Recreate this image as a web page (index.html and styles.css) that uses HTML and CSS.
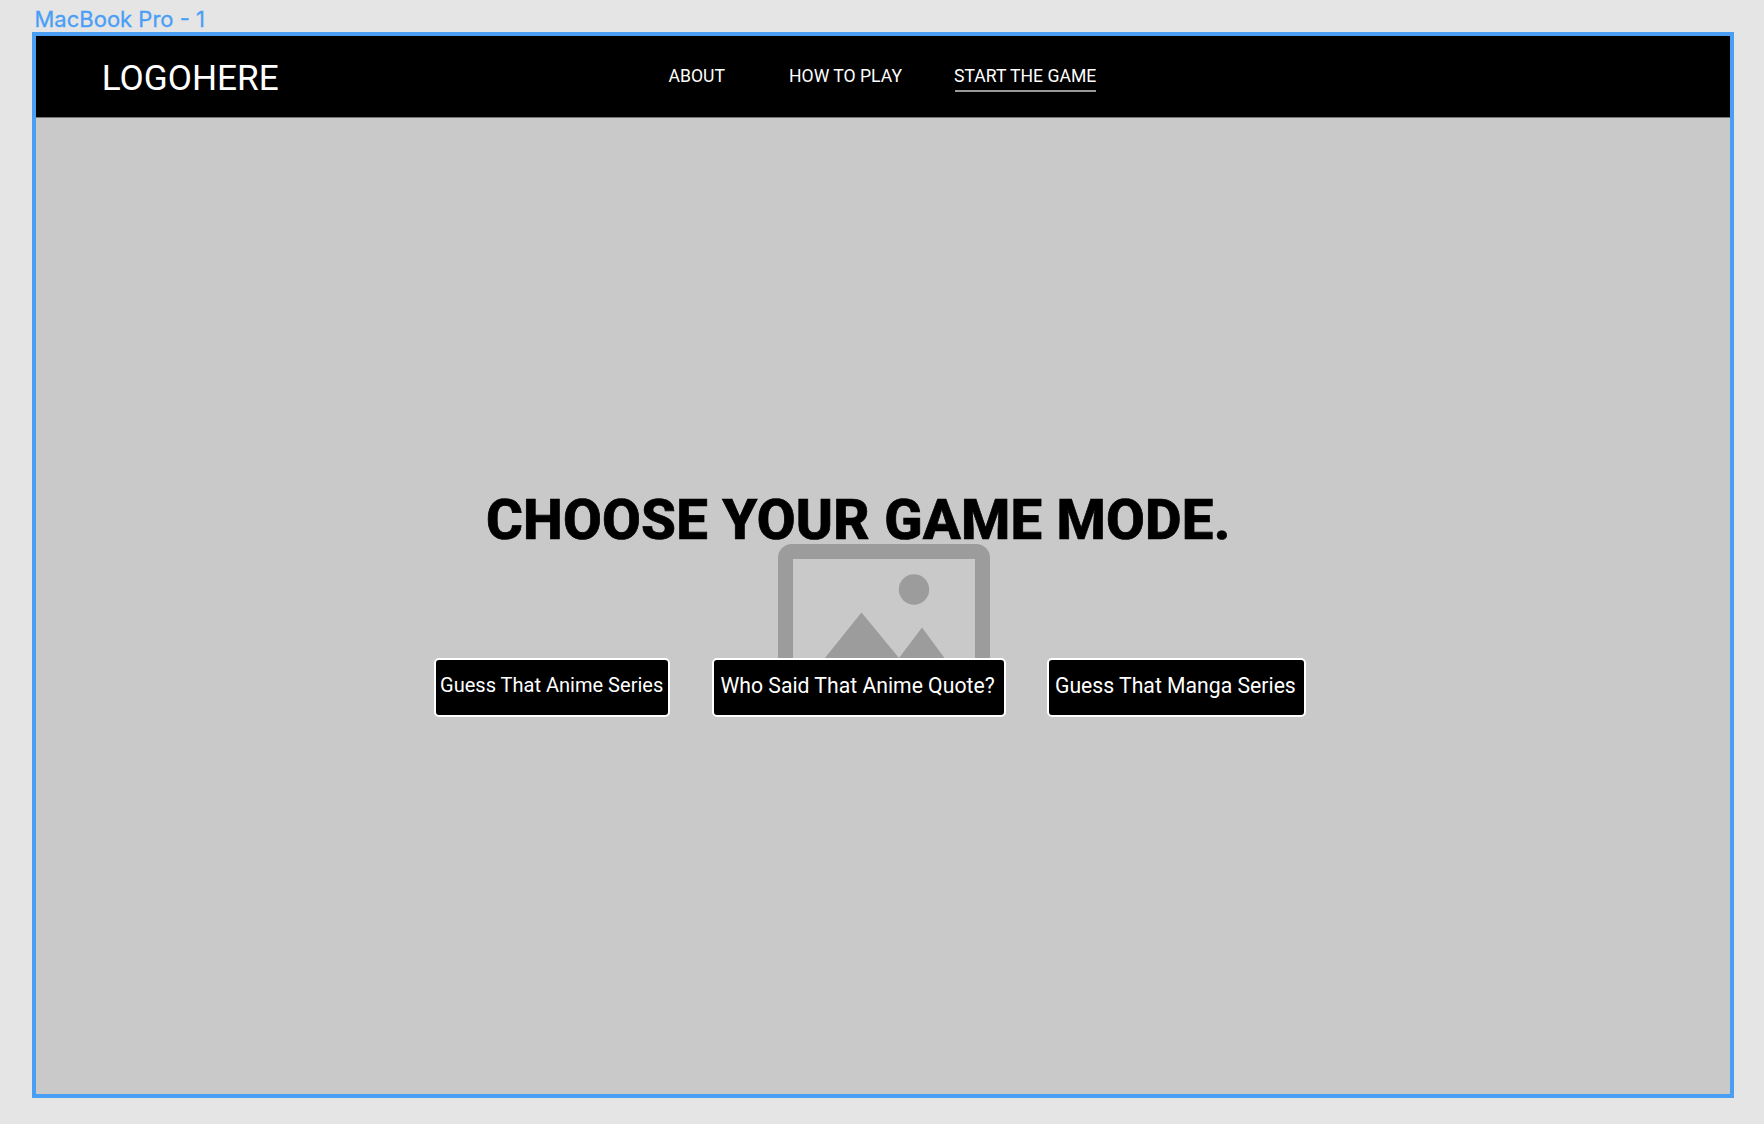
FILE: index.html
```html
<!DOCTYPE html>
<html lang="en">
<head>
<meta charset="utf-8">
<title>MacBook Pro - 1</title>
<link rel="stylesheet" href="styles.css">
</head>
<body>
<div class="label">MacBook Pro - 1</div>
<div class="frame">
  <header class="header">
    <div class="logo">LOGOHERE</div>
    <nav class="nav">
      <a class="about">ABOUT</a>
      <a class="how">HOW TO PLAY</a>
      <a class="start">START THE GAME</a>
    </nav>
  </header>
  <main class="main">
    <svg class="picture" width="214" height="150" viewBox="0 0 214 150" fill="#9c9c9c">
      <path fill-rule="evenodd" d="M14 0H198a14 14 0 0 1 14 14V150H0V14A14 14 0 0 1 14 0ZM15 15V135H197V15Z"/>
      <circle cx="136" cy="45.500" r="15.200"/>
      <path d="M83.500 68.500 121 114 144 83.500 182 135H30Z"/>
    </svg>
    <h1 class="title">CHOOSE YOUR GAME MODE.</h1>
    <div class="modes">
      <button class="mode anime">Guess That Anime Series</button>
      <button class="mode quote">Who Said That Anime Quote?</button>
      <button class="mode manga">Guess That Manga Series</button>
    </div>
  </main>
</div>
</body>
</html>
```
FILE: styles.css
```css
* { box-sizing: border-box; }
body { margin: 0; height: 1124px; overflow: hidden; background: #e5e5e5; font-family: Roboto, sans-serif; }
.label { height: 32px; padding: 5px 0 0 34.5px; font: 22px/28px Inter, sans-serif; color: #4a9ff5; -webkit-text-stroke: .3px #4a9ff5; }
.frame { width: 1702px; height: 1066px; margin-left: 32px; border: 4px solid #4a9ff5; background: #c9c9c9; }
.header { display: flex; height: 82px; border-bottom: 1px solid #777; background: #000; color: #fff; }
.logo { width: 632px; padding: 21px 0 0 65.7px; font-size: 35.2px; line-height: 43px; }
.nav { display: flex; padding-top: 29px; font-size: 17.6px; line-height: 22px; }
.nav a { height: 27px; }
.about { width: 121px; padding-left: .5px; }
.how { width: 166px; }
.start { width: 141px; border-bottom: 2px solid #999; white-space: nowrap; text-indent: -1px; }
.main { position: relative; height: 976px; padding-top: 369px; }
.picture { position: absolute; left: 742px; top: 426px; }
.title { position: relative; margin: 0 0 0 450px; font-size: 56.32px; line-height: 66px; font-weight: 800; letter-spacing: .2px; -webkit-text-stroke: .7px #000; white-space: nowrap; }
.modes { position: relative; display: flex; margin: 105px 0 0 398px; }
.mode { height: 59px; padding: 0 0 3px; border: 2px solid #fff; border-radius: 5px; background: #000; color: #fff; font: 21.2px/24px Roboto, sans-serif; text-align: left; white-space: nowrap; }
.anime { width: 236px; margin-right: 42px; padding: 0 0 5px 4px; font-size: 20.05px; }
.quote { width: 294px; margin-right: 41px; padding-left: 6.5px; }
.manga { width: 259px; padding-left: 6px; }
```
